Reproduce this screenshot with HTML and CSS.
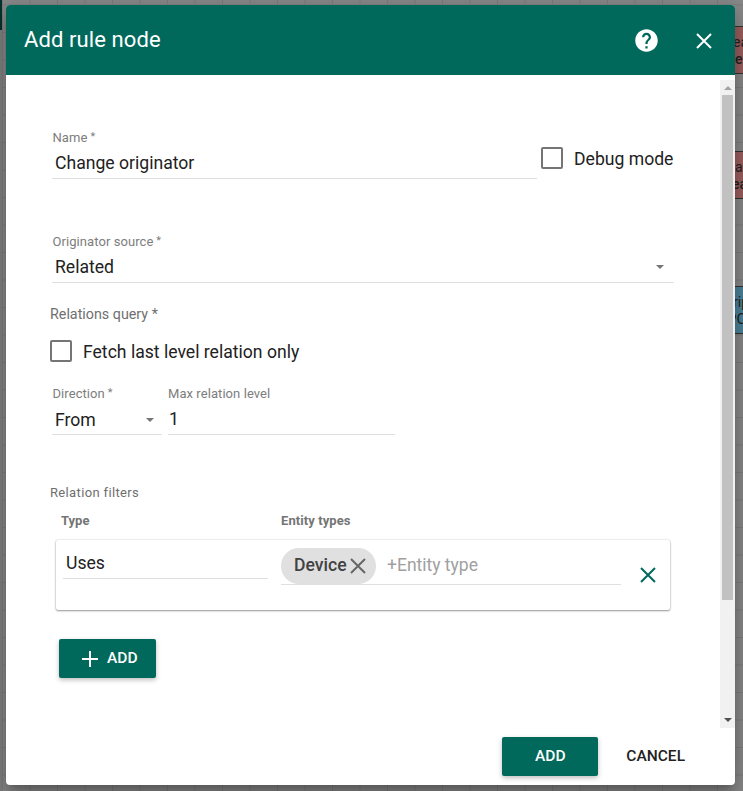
FILE: index.html
```html
<!DOCTYPE html>
<html lang="en">
<head>
<meta charset="utf-8">
<title>Add rule node</title>
<link rel="stylesheet" href="styles.css">
</head>
<body>
<div class="canvas">
  <div class="palette-edge"></div>
  <div class="node node-red node-a"><span>ea</span><span>e</span></div>
  <div class="node node-red node-b"><span>a</span><span>ea</span></div>
  <div class="node node-blue node-c"><span>rip</span><span>PC</span></div>
</div>
<main class="dialog">
  <header class="toolbar">
    <h1>Add rule node</h1>
    <svg class="help" viewBox="0 0 24 24"><path d="M12 2C6.48 2 2 6.48 2 12s4.480 10 10 10 10-4.480 10-10S17.520 2 12 2zm1 17h-2v-2h2v2zm2.070-7.750l-.9.920C13.450 12.900 13 13.500 13 15h-2v-.5c0-1.100.450-2.100 1.170-2.830l1.240-1.260c.370-.360.590-.860.590-1.410 0-1.100-.9-2-2-2s-2 .9-2 2H8c0-2.210 1.790-4 4-4s4 1.790 4 4c0 .880-.360 1.680-.930 2.250z"/></svg>
    <svg class="close" viewBox="0 0 16 16"><path d="M1 1L15 15M15 1L1 15"/></svg>
  </header>
  <div class="scroll">
    <form class="content">
      <div class="row name-row">
        <div class="field name"><label>Name<sup>*</sup></label><div class="value">Change originator</div></div>
        <div class="check debug"><i class="box"></i><span>Debug mode</span></div>
      </div>
      <div class="field source"><label>Originator source<sup>*</sup></label><div class="value"><span>Related</span><i class="arrow"></i></div></div>
      <div class="caption query">Relations query *</div>
      <div class="check fetch"><i class="box"></i><span>Fetch last level relation only</span></div>
      <div class="row level-row">
        <div class="field direction"><label>Direction<sup>*</sup></label><div class="value"><span>From</span><i class="arrow"></i></div></div>
        <div class="field level"><label>Max relation level</label><div class="value">1</div></div>
      </div>
      <div class="caption filters">Relation filters</div>
      <div class="heads"><span class="head-type">Type</span><span class="head-entity">Entity types</span></div>
      <div class="card">
        <div class="type">Uses</div>
        <div class="chips">
          <div class="chip"><span>Device</span><svg viewBox="0 0 16 16"><path d="M1 1L15 15M15 1L1 15"/></svg></div>
          <span class="placeholder">+Entity type</span>
        </div>
        <svg class="remove" viewBox="0 0 16 16"><path d="M1 1L15 15M15 1L1 15"/></svg>
      </div>
      <div class="button add-filter"><svg viewBox="0 0 16 16"><path d="M8 0V16M0 8H16"/></svg><span>ADD</span></div>
    </form>
    <div class="scrollbar"><i class="up"></i><i class="thumb"></i><i class="down"></i></div>
  </div>
  <footer class="actions"><div class="button submit"><span>ADD</span></div><div class="cancel">CANCEL</div></footer>
</main>
</body>
</html>
```
FILE: styles.css
```css
* { box-sizing: border-box; }
body {
  margin: 0;
  width: 743px;
  height: 791px;
  overflow: hidden;
  padding: 5px 8px 6px 6px;
  font-family: Roboto, "Liberation Sans", sans-serif;
  color: #212121;
  background: #7f7f7f;
}
h1 { margin: 0; font-weight: 400; }
svg { display: block; flex: none; fill: none; }
i { display: block; flex: none; }

.canvas {
  position: absolute;
  inset: 0;
  overflow: hidden;
  background-color: #888;
  background-image:
    linear-gradient(#7c7c7c 1px, transparent 1px),
    linear-gradient(90deg, #7c7c7c 1px, transparent 1px);
  background-size: 27.5px 27.5px;
  background-position: 2px 4.500px;
}
.palette-edge {
  position: absolute;
  left: 0;
  top: 0;
  width: 2px;
  height: 791px;
  background: linear-gradient(#00352d 30px, #808080 30px);
}
.node {
  position: absolute;
  left: 728px;
  width: 30px;
  height: 48px;
  padding: 7px 0 0 4px;
  border: 1px solid #333;
  font-size: 14px;
  line-height: 17px;
  color: #222;
}
.node span { display: block; }
.node span + span { margin-left: 2px; font-weight: 500; }
.node-red { background: #9c5e5e; }
.node-blue { background: #4d8299; }
.node-a { top: 26px; }
.node-b { top: 151px; }
.node-b span { margin-left: 2px; }
.node-b span + span { margin-left: -1px; }
.node-c { top: 286px; }
.node-c span + span { margin-left: -6px; font-size: 15px; font-weight: 400; }

.dialog {
  position: relative;
  display: flex;
  flex-direction: column;
  width: 729px;
  height: 780px;
  background: #fff;
  border-radius: 4px;
  overflow: hidden;
}
.canvas + .dialog {
  box-shadow: 0 7px 8px -4px rgba(0,0,0,.2), 0 13px 19px 2px rgba(0,0,0,.14), 0 5px 24px 4px rgba(0,0,0,.12);
}
.toolbar {
  display: flex;
  align-items: center;
  flex: none;
  height: 70px;
  padding: 0 23px 0 18px;
  background: #00695c;
  color: #fff;
}
.toolbar h1 { flex: 1; font-size: 22px; letter-spacing: .1px; padding-bottom: 2px; }
.help { width: 27px; height: 27px; fill: #fff; margin-right: 36px; }
.close { width: 16px; height: 16px; stroke: #fff; stroke-width: 2; margin-top: 1px; }

.scroll { display: flex; flex: none; height: 648px; margin-top: 5px; }
.content { flex: 1; padding-left: 44px; }
.row { display: flex; }
.field { border-bottom: 1px solid #e0e0e0; }
.field label {
  display: block;
  height: 16px;
  padding: 1px 0 0 .5px;
  font-size: 13px;
  line-height: 16px;
  letter-spacing: .07px;
  color: #7d7d7d;
}
.field sup { margin-left: 3px; font-size: 11px; line-height: 0; vertical-align: 2px; }
.field .value {
  display: flex;
  align-items: center;
  justify-content: space-between;
  height: 33px;
  padding: 2px 10px 0 3px;
  font-size: 17.600px;
}
.arrow {
  width: 0;
  border: 4px solid transparent;
  border-top: 4px solid #757575;
  border-bottom: 0;
}
.name { width: 485px; height: 50px; margin-left: 2px; }
.name-row { padding-top: 49px; }
.check { display: flex; align-items: center; font-size: 17.600px; }
.box { width: 22px; height: 22px; border: 2px solid #757575; border-radius: 2px; }
.check span { margin-left: 11px; padding-top: 2px; }
.debug { height: 22px; margin: 18px 0 0 4px; }
.source { width: 622px; height: 50px; margin: 54px 0 0 2px; }
.caption { color: #6f6f6f; }
.query { margin-top: 21px; font-size: 14.300px; line-height: 20px; }
.fetch { height: 22px; margin-top: 16px; }
.level-row { margin-top: 23px; gap: 6px; }
.direction { width: 110px; height: 50px; margin-left: 2px; }
.direction .value { padding-right: 8px; padding-top: 4px; }
.level { width: 227px; height: 50px; }
.level label { padding-left: 0; }
.level .value { padding-left: 1px; }
.filters { margin-top: 49px; font-size: 13px; line-height: 18px; letter-spacing: .35px; }
.heads {
  display: flex;
  padding: 10px 0 0 11px;
  font-size: 13px;
  line-height: 18px;
  font-weight: 700;
  color: #757575;
}
.head-type { width: 220px; }
.head-entity { letter-spacing: .08px; }
.card {
  display: flex;
  width: 614px;
  height: 70px;
  margin: 10px 0 0 6px;
  padding: 8px 14px 0 7px;
  border-radius: 2px;
  box-shadow: 0 1px 2px rgba(0,0,0,.38), 0 0 2px rgba(0,0,0,.2);
}
.type {
  width: 205px;
  height: 31px;
  padding-left: 3px;
  font-size: 17.600px;
  line-height: 30px;
  border-bottom: 1px solid #e0e0e0;
}
.chips {
  display: flex;
  width: 340px;
  height: 37px;
  margin-left: 13px;
  border-bottom: 1px solid #e0e0e0;
}
.chip {
  display: flex;
  align-items: center;
  width: 95px;
  height: 36px;
  padding-left: 13px;
  border-radius: 18px;
  background: #e0e0e0;
  color: #424242;
  font-size: 17.600px;
  font-weight: 500;
}
.chip span { padding-bottom: 2px; }
.chip svg { width: 16px; height: 16px; margin: 0 0 0 3px; stroke: #666; stroke-width: 2; }
.placeholder { margin-left: 11px; font-size: 17.500px; line-height: 35px; color: #a0a0a0; }
.remove { width: 16px; height: 16px; margin: 19px 0 0 19px; stroke: #00695c; stroke-width: 2; }
.button {
  display: flex;
  align-items: center;
  height: 39px;
  background: #00695c;
  color: #fff;
  border-radius: 2px;
  font-size: 15.500px;
  font-weight: 500;
  box-shadow: 0 2px 5px rgba(0,0,0,.26);
}
.button span, .cancel { padding-bottom: 2px; }
.add-filter { width: 97px; margin: 29px 0 0 9px; padding-left: 23px; }
.add-filter svg { width: 16px; height: 16px; margin: 1px 9px 0 0; stroke: #fff; stroke-width: 2; }
.scrollbar {
  display: flex;
  flex-direction: column;
  align-items: center;
  width: 15px;
  background: #f1f1f1;
}
.up { border: 4px solid transparent; border-bottom: 4px solid #a3a3a3; border-top: 0; margin: 6px 0 5px; }
.thumb { width: 11px; height: 505px; background: #c1c1c1; }
.down { border: 4px solid transparent; border-top: 4px solid #505050; border-bottom: 0; margin-top: 118px; }
.actions {
  display: flex;
  align-items: center;
  justify-content: flex-end;
  flex: 1;
  padding-right: 50px;
  font-size: 15.500px;
  font-weight: 500;
}
.submit { width: 96px; justify-content: center; margin-right: 28px; }
```
